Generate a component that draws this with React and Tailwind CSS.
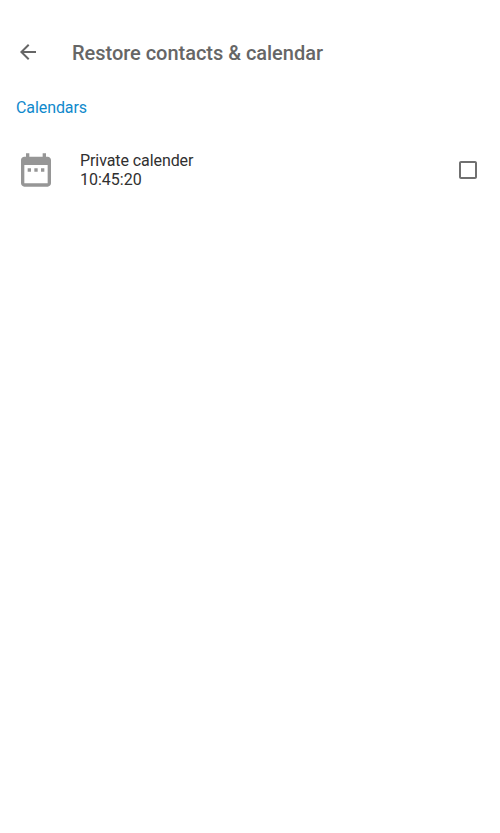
export default function App() {
  return (
    <main className="h-[833px] w-[500px] overflow-hidden bg-white font-['Roboto',sans-serif]">
      <header className="flex h-[84px] items-start pt-10 pl-4 text-[#666666]">
        <button aria-label="Back" className="flex size-6">
          <svg viewBox="0 0 24 24" className="size-6" fill="currentColor">
            <path d="M20 11H7.83l5.59-5.59L12 4l-8 8 8 8 1.41-1.41L7.83 13H20v-2z" />
          </svg>
        </button>
        <h1 className="mt-px ml-8 text-xl leading-6 font-medium tracking-[-0.03px]">Restore contacts &amp; calendar</h1>
      </header>
      <h2 className="mt-3.5 ml-4 text-base leading-[19px] tracking-[-0.08px] text-[#1089cc]">Calendars</h2>
      <section className="mt-[33px] flex items-center pr-5 pl-4">
        <svg viewBox="0 0 24 24" className="size-10 shrink-0" fill="#969696">
          <path d="M9 11H7v2h2v-2zm4 0h-2v2h2v-2zm4 0h-2v2h2v-2zm2-7h-1V2h-2v2H8V2H6v2H5c-1.11 0-1.99.9-1.99 2L3 20c0 1.1.89 2 2 2h14c1.1 0 2-.9 2-2V6c0-1.1-.9-2-2-2zm0 16H5V9h14v11z" />
        </svg>
        <div className="ml-6 flex-1 text-base leading-[19px] text-[#303030]">
          <p className="tracking-[-0.08px]">Private calender</p>
          <p>10:45:20</p>
        </div>
        <button role="checkbox" aria-checked="false" aria-label="Private calender" className="flex size-6">
          <svg viewBox="0 0 24 24" className="size-6" fill="#707070">
            <path d="M19 5v14H5V5h14m0-2H5c-1.1 0-2 .9-2 2v14c0 1.1.9 2 2 2h14c1.1 0 2-.9 2-2V5c0-1.1-.9-2-2-2z" />
          </svg>
        </button>
      </section>
    </main>
  );
}
